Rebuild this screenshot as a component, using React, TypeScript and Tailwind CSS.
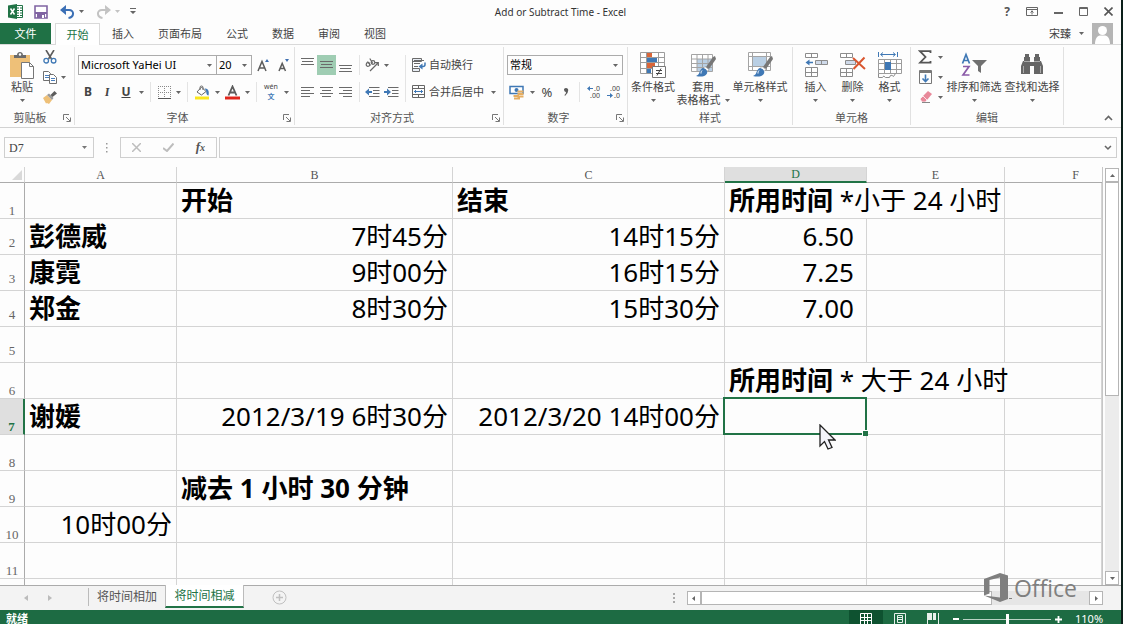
import { useState, type ReactNode } from "react";
import clsx from "clsx";

type Cell = {
  text?: ReactNode;
  bold?: boolean;
  align?: "right";
  indent?: boolean;
  span?: number;
  selected?: boolean;
};

const TABS = ["插入", "页面布局", "公式", "数据", "审阅", "视图"];

const COLUMNS = ["A", "B", "C", "D", "E", "F"];

const empty: Cell = {};

const ROWS: Cell[][] = [
  [
    empty,
    { text: "开始", bold: true },
    { text: "结束", bold: true },
    { text: <><b>所用时间</b> *小于 24 小时</>, span: 2 },
    empty,
  ],
  [
    { text: "彭德威", bold: true },
    { text: "7时45分", align: "right" },
    { text: "14时15分", align: "right" },
    { text: "6.50", align: "right", indent: true },
    empty,
    empty,
  ],
  [
    { text: "康霓", bold: true },
    { text: "9时00分", align: "right" },
    { text: "16时15分", align: "right" },
    { text: "7.25", align: "right", indent: true },
    empty,
    empty,
  ],
  [
    { text: "郑金", bold: true },
    { text: "8时30分", align: "right" },
    { text: "15时30分", align: "right" },
    { text: "7.00", align: "right", indent: true },
    empty,
    empty,
  ],
  [empty, empty, empty, empty, empty, empty],
  [empty, empty, empty, { text: <><b>所用时间</b> * 大于 24 小时</>, span: 3 }],
  [
    { text: "谢媛", bold: true },
    { text: "2012/3/19 6时30分", align: "right" },
    { text: "2012/3/20 14时00分", align: "right" },
    { selected: true },
    empty,
    empty,
  ],
  [empty, empty, empty, empty, empty, empty],
  [empty, { text: "减去 1 小时 30 分钟", bold: true }, empty, empty, empty, empty],
  [{ text: "10时00分", align: "right" }, empty, empty, empty, empty, empty],
  [empty, empty, empty, empty, empty, empty],
];

function Arrow({ className = "" }: { className?: string }) {
  return (
    <svg width="5" height="3" viewBox="0 0 5 3" className={clsx("shrink-0", className)} aria-hidden="true">
      <path d="M0 0h5L2.5 3z" fill="currentColor" />
    </svg>
  );
}

function Drop({ label }: { label: string }) {
  return (
    <button type="button" aria-label={label} className="flex h-5 w-2.5 shrink-0 items-center justify-center text-[#666]">
      <Arrow />
    </button>
  );
}

function Tool({ label, className = "w-5", children }: { label: string; className?: string; children: ReactNode }) {
  return (
    <button
      type="button"
      aria-label={label}
      className={clsx("flex h-5 shrink-0 items-center justify-center text-[#444]", className)}
    >
      {children}
    </button>
  );
}

function Divider() {
  return <span className="mx-1 h-5 w-px shrink-0 bg-[#e4e4e4]" />;
}

function BigButton({ icon, label, second, className }: { icon: ReactNode; label: string; second?: string; className: string }) {
  return (
    <button type="button" className={clsx("flex shrink-0 flex-col items-center whitespace-nowrap text-[11px] leading-[14px]", className)}>
      <span className="flex h-7 items-center">{icon}</span>
      <span className="mt-px">{label}</span>
      <span className="flex h-3 items-center gap-1">
        {second}
        <Arrow className="text-[#666]" />
      </span>
    </button>
  );
}

function Group({ title, launcher, className, children }: { title: string; launcher?: boolean; className: string; children: ReactNode }) {
  return (
    <section className={clsx("flex shrink-0 flex-col justify-between border-r border-[#e1e1e1]", className)} aria-label={title}>
      {children}
      <div className="flex h-3.5 items-center text-[11px] leading-[14px] text-[#555]">
        <span className="flex-1 text-center">{title}</span>
        {launcher && (
          <button type="button" aria-label={`${title}设置`} className="flex w-3.5 items-end justify-center">
            <svg width="8" height="8" viewBox="0 0 8 8" fill="none" stroke="#777">
              <path d="M.5 6V.5H6M3 3l4 4M7.500 3.500v4h-4" />
            </svg>
          </button>
        )}
      </div>
    </section>
  );
}

/* horizontal bars used by all of the alignment buttons */
function Lines({ rows }: { rows: [number, number, number][] }) {
  return (
    <svg width="13" height="16" viewBox="0 0 13 16" stroke="#6a6a6a" aria-hidden="true">
      {rows.map(([x1, x2, y]) => (
        <path key={y} d={`M${x1} ${y}.5H${x2}`} />
      ))}
    </svg>
  );
}

function PasteIcon() {
  return (
    <svg width="26" height="28" viewBox="0 0 26 28">
      <path d="M1 4h20v22H1z" fill="#eec078" />
      <path d="M5 7V4h3c0-4 6-4 6 0h3v3z" fill="#6b6b6b" />
      <circle cx="11" cy="3.500" r="1.200" fill="#fff" />
      <path d="M12.500 11.500h8l4 4v12h-12z" fill="#fff" stroke="#777" />
      <path d="M20.500 11.500v4h4" fill="none" stroke="#777" />
    </svg>
  );
}

function CutIcon() {
  return (
    <svg width="14" height="14" viewBox="0 0 14 14" fill="none">
      <path d="M3 0l5.500 9M11 0L5.500 9" stroke="#5c5c5c" strokeWidth="1.600" />
      <circle cx="3.200" cy="10.700" r="2.300" stroke="#3f78b5" strokeWidth="1.300" />
      <circle cx="10.600" cy="10.700" r="2.300" stroke="#3f78b5" strokeWidth="1.300" />
    </svg>
  );
}

function CopyIcon() {
  return (
    <svg width="14" height="14" viewBox="0 0 14 14" fill="#fff" stroke="#707070">
      <path d="M.5 1.500h5l2 2v7h-7z" />
      <path d="M2 5.500h4M2 7.500h4" stroke="#4a7ebb" />
      <path d="M6.500 4.500h4l3 3v6h-7z" />
      <path d="M8 8.500h4M8 10.500h4" stroke="#4a7ebb" />
    </svg>
  );
}

function BrushIcon() {
  return (
    <svg width="14" height="13" viewBox="0 0 14 13">
      <path d="M0 7l4-3 5 5-3 4-2-1-1 .5z" fill="#eec078" />
      <path d="M4 4l2-1.500L10.500 7 9 9z" fill="#999" />
      <path d="M7.500 4L11.500 0 14 2.500l-4.500 3.500z" fill="#5c5c5c" />
    </svg>
  );
}

function FontSizeIcon({ up }: { up?: boolean }) {
  return (
    <svg width="14" height="14" viewBox="0 0 14 14" fill="none">
      {up ? (
        <path d="M1 13L5 3.500 9 13M2.500 10h5" stroke="#5c5c5c" strokeWidth="1.500" />
      ) : (
        <path d="M2 13L5.200 5.500 8.500 13M3 10.500h4.500" stroke="#5c5c5c" strokeWidth="1.500" />
      )}
      <path d={up ? "M8 4l2-3 2 3z" : "M8 1h4l-2 3z"} fill="#3f6fb0" />
    </svg>
  );
}

function BorderIcon() {
  return (
    <svg width="13" height="13" viewBox="0 0 13 13" stroke="#8a8a8a" fill="none">
      <path d="M.5 0v12M6.500 0v12M12.500 0v12M0 .5h12M0 6.500h12" strokeDasharray="1 1" />
      <path d="M0 12.500h13" stroke="#555" />
    </svg>
  );
}

function FillIcon() {
  return (
    <svg width="15" height="15" viewBox="0 0 15 15" fill="none">
      <path d="M2 7l4.500-5L11 6.500 6.500 10z" fill="#fff" stroke="#666" />
      <path d="M5 5V2.500a1.500 1.500 0 013 0V5" stroke="#666" />
      <path d="M9.500 3.500c3.500-.5 5 2.500 4 7-2.500-.5-2-3-2.500-5z" fill="#3f78b5" />
      <path d="M0 11.500h14v3H0z" fill="#fbe61c" />
    </svg>
  );
}

function FontColorIcon() {
  return (
    <svg width="15" height="15" viewBox="0 0 15 15" fill="none">
      <path d="M3.500 10.500L7.500 1.500l4 9M5 7.500h5" stroke="#5c5c5c" strokeWidth="1.800" />
      <path d="M0 11.500h15v3H0z" fill="#e0261c" />
    </svg>
  );
}

function OrientIcon() {
  return (
    <svg width="15" height="14" viewBox="0 0 15 14" fill="none" stroke="#666" strokeWidth="1.200">
      <circle cx="3" cy="6.500" r="1.800" />
      <path d="M2.500 3.500l3 4" />
      <circle cx="8" cy="4.500" r="1.800" />
      <path d="M4.800.5l3 5M5 13l8-8M10 4.700h3.300V8" />
    </svg>
  );
}

function IndentIcon({ right }: { right?: boolean }) {
  return (
    <svg width="15" height="12" viewBox="0 0 15 12" fill="none">
      <path d="M4 1.500h10.500M8 4.500h6.500M8 7.500h6.500M4 10.500h10.500" stroke="#6a6a6a" />
      <path d={right ? "M0 5h3V2.500L7 6 3 9.500V7H0z" : "M7 5H4V2.500L0 6l4 3.500V7h3z"} fill="#3f78b5" />
    </svg>
  );
}

function WrapIcon() {
  return (
    <svg width="14" height="14" viewBox="0 0 14 14" fill="none">
      <path d="M.5.500h9v3h-9zM.5 10.500h7v3h-7z" fill="#e8edf4" stroke="#6a6a6a" />
      <path d="M2 2.500h10M.5 3v8M2 5.500h6M2 8.500h4" stroke="#6a6a6a" />
      <path d="M13 4.500v2q0 2-2 2H9.500" stroke="#3f78b5" strokeWidth="1.500" />
      <path d="M10.500 5.500v6l-4-3z" fill="#3f78b5" />
    </svg>
  );
}

function MergeIcon() {
  return (
    <svg width="14" height="14" viewBox="0 0 14 14" fill="none" stroke="#666">
      <path d="M.5.500h12v12H.5zM.5 3.500h12M.5 9.500h12M6.500.500v3M6.500 9.500v3" />
      <path d="M2 6.500h9M4 5L2.500 6.500 4 8M9 5l1.500 1.500L9 8" stroke="#3f78b5" />
    </svg>
  );
}

function CurrencyIcon() {
  return (
    <svg width="16" height="15" viewBox="0 0 16 15" fill="none">
      <path d="M1 1.500h13v7H1z" fill="#fff" stroke="#3f78b5" strokeWidth="1.500" />
      <circle cx="7.500" cy="5" r="2" fill="#3f78b5" />
      <path d="M8.500 6.500h6M8.500 9h6M4.500 11h5.500M5 13.500h6M8.500 11.500h6" stroke="#e6ae62" strokeWidth="1.800" />
    </svg>
  );
}

function DecimalIcon({ more }: { more?: boolean }) {
  return (
    <svg width="14" height="14" viewBox="0 0 14 14" fontFamily="Noto Sans" fontSize="7" fill="#444">
      <text x={more ? 7 : 3} y="6">{more ? ".0" : ".00"}</text>
      <text x={more ? 3 : 7} y="13">{more ? ".00" : ".0"}</text>
      {more ? (
        <path d="M0 3.500L3 1v2h3v1H3v2z" fill="#3f78b5" />
      ) : (
        <path d="M6 10.500L3 8v2H0v1h3v2z" fill="#3f78b5" />
      )}
    </svg>
  );
}

function ConditionalIcon() {
  return (
    <svg width="28" height="28" viewBox="0 0 28 28" fill="none">
      <path d="M1.500 1.500h24v21h-24z" fill="#fff" />
      <path d="M1.500 1.500h24v21h-24zM7.500 1.500v21M19.500 1.500v21M1.500 6.500h24M1.500 11.500h24M1.500 17.500h24" stroke="#9c9c9c" />
      <path d="M8 2h5v4H8zM8 12h8v5H8z" fill="#d9663a" />
      <path d="M8 7h10v4H8zM8 18h4v4H8z" fill="#3f78b5" />
      <path d="M13.500 15.500h13v11h-13z" fill="#fff" stroke="#777" />
      <path d="M17 19.500h6M17 22.500h6M22 17.500l-4 7" stroke="#444" />
    </svg>
  );
}

function StyleBrush() {
  return (
    <>
      <path d="M26 5l1 3-7 10-3-2 7-10z" fill="#777" />
      <path d="M16 15.500l4 3-2 2-4-3z" fill="#fff" stroke="#888" strokeWidth=".6" />
      <path d="M14 17c3 .5 5 3 4 5.500C16 26 11 26 7 25c3-1 3-3 4-5s2-2.800 3-3z" fill="#3f78b5" />
      <path d="M13 19.500c-1 1-1 2-1 3" stroke="#fff" />
    </>
  );
}

function TableStyleIcon() {
  return (
    <svg width="28" height="28" viewBox="0 0 28 28" fill="none">
      <path d="M2.500 3.500h21v17h-21z" fill="#fff" />
      <path d="M8 8h15.500v12.500H8z" fill="#b9cfe4" />
      <path d="M2.500 3.500h21v17h-21zM8 3.500v17M13.500 3.500v17M19 3.500v17M2.500 8h21M2.500 12.500h21M2.500 16.500h21" stroke="#a4a4a4" />
      <StyleBrush />
    </svg>
  );
}

function CellStyleIcon() {
  return (
    <svg width="28" height="28" viewBox="0 0 28 28" fill="none">
      <path d="M2.500 1.500h21v18h-21z" fill="#fff" />
      <path d="M7 6h13v9H7z" fill="#b9cfe4" />
      <path d="M2.500 1.500h22v18h-22zM6.500 1.500v18M20.500 1.500v18M2.500 5.500h22M2.500 15.500h22" stroke="#a4a4a4" />
      <StyleBrush />
    </svg>
  );
}

function InsertCellsIcon() {
  return (
    <svg width="26" height="28" viewBox="0 0 26 28" fill="none" stroke="#8c8c8c">
      <path d="M2.500 2.500h12v4h-12zM8.500 2.500v4" fill="#fff" />
      <path d="M2.500 16.500h12v9h-12zM8.500 16.500v9M2.500 21.500h12" fill="#fff" />
      <path d="M12.500 9.500h12v4h-12zM18.500 9.500v4" fill="#cfdaea" />
      <path d="M10 10.800H6.500V8.500L2.500 11.500l4 3v-2.200H10z" fill="#3f78b5" stroke="none" />
    </svg>
  );
}

function DeleteCellsIcon() {
  return (
    <svg width="27" height="28" viewBox="0 0 27 28" fill="none" stroke="#8c8c8c">
      <path d="M1.500 2.500h12v4h-12zM7.500 2.500v4" fill="#fff" />
      <path d="M1.500 17.500h12v8h-12zM7.500 17.500v8M1.500 21.500h12" fill="#fff" />
      <path d="M6.500 9.500h10v4h-10z" fill="#cfdaea" />
      <path d="M14 7l12 11M25.500 6.500L14.500 18" stroke="#d9562f" strokeWidth="2" />
    </svg>
  );
}

function FormatCellsIcon() {
  return (
    <svg width="26" height="28" viewBox="0 0 26 28" fill="none">
      <path d="M1.500 1v5M20.500 1v5M4 3.500h14M6 1.500l-2.500 2L6 5.500M16 1.500l2.500 2-2.500 2" stroke="#3f78b5" />
      <path d="M1.500 8.500h23v14h-23zM7.500 8.500v14M13.500 8.500v14M19.500 8.500v14M1.500 12.500h23M1.500 18.500h23" fill="#fff" stroke="#9c9c9c" />
      <path d="M8 11h6v8H8z" fill="#3f78b5" />
      <path d="M1.500 22.500v4h4q1-3 3 0h4q1-4 4-1l2-3" stroke="#8c8c8c" />
    </svg>
  );
}

function SortIcon() {
  return (
    <svg width="26" height="28" viewBox="0 0 26 28" fill="none">
      <path d="M1.500 12.500L5 3.500l3.500 9M2.500 9.500h5" stroke="#3f78b5" strokeWidth="1.700" />
      <path d="M2 15.500h6l-6 8.500h6.500" stroke="#8a5aa8" strokeWidth="1.700" />
      <path d="M11 9h15l-6 6v7l-3-2v-5z" fill="#707070" />
    </svg>
  );
}

function FindIcon() {
  return (
    <svg width="24" height="28" viewBox="0 0 24 28" fill="#666">
      <path d="M5 3h4v3h1v5h4V6h1V3h4v3h1v4h1l2 5v8h-9v-8h-4v8H1v-8l2-5h1V6h1z" />
      <path d="M4 10.500h6M14 10.500h6M3.500 15v7M20.500 15v7" stroke="#bbb" strokeWidth=".8" />
    </svg>
  );
}

function TitleBar() {
  return (
    <header className="flex h-[23px] items-center pl-2 pr-2">
      <div className="flex flex-1 items-center text-[#666]">
        <svg width="15" height="15" viewBox="0 0 15 15" className="mr-[11px]" aria-hidden="true">
          <path d="M8 1.500h6.500v12H8z" fill="#fff" stroke="#217346" />
          <path d="M9 4h5M9 6.500h5M9 9h5M9 11.500h5" stroke="#217346" strokeWidth="1.200" />
          <path d="M11.500 2v11" stroke="#fff" />
          <path d="M0 1.500L9 0v15l-9-1.500z" fill="#217346" />
          <path d="M2.500 4.500l4 6M6.500 4.500l-4 6" stroke="#fff" strokeWidth="1.500" />
        </svg>
        <button type="button" aria-label="保存" className="mr-3">
          <svg width="14" height="14" viewBox="0 0 14 14">
            <path d="M1 1h12v12H1z" fill="#fff" stroke="#8064a2" strokeWidth="1.600" />
            <path d="M1 7h12v2H1zM3 9h8v4H3z" fill="#8064a2" />
            <path d="M8 10h2v3H8z" fill="#fff" />
          </svg>
        </button>
        <button type="button" aria-label="撤消" className="mr-1">
          <svg width="15" height="14" viewBox="0 0 15 14" fill="none">
            <path d="M3 5h6c5.500 0 5.500 7-.5 8" stroke="#3b6fb5" strokeWidth="2" />
            <path d="M0 5l6-5v3.500L4 5l2 1.500V10z" fill="#3b6fb5" />
          </svg>
        </button>
        <Arrow />
        <button type="button" aria-label="恢复" className="ml-3 mr-1">
          <svg width="15" height="14" viewBox="0 0 15 14" fill="none">
            <path d="M12 5H6C.5 5 .5 12 6.500 13" stroke="#c3c3c3" strokeWidth="2" />
            <path d="M15 5L9 0v3.500L11 5 9 6.500V10z" fill="#c3c3c3" />
          </svg>
        </button>
        <Arrow className="text-[#c3c3c3]" />
        <button type="button" aria-label="自定义快速访问工具栏" className="ml-2.5">
          <svg width="6" height="7" viewBox="0 0 6 7" fill="#666">
            <path d="M0 0h6v1H0zM0 3h6L3 6z" />
          </svg>
        </button>
      </div>
      <h1 className="text-[10px] leading-4 text-[#333]">Add or Subtract Time - Excel</h1>
      <div className="flex flex-1 items-center justify-end gap-4">
        <button type="button" aria-label="帮助" className="text-[12px] font-bold leading-4 text-[#555]">?</button>
        <button type="button" aria-label="功能区显示选项">
          <svg width="12" height="9" viewBox="0 0 12 9" fill="none" stroke="#666">
            <path d="M.5.500h11v8H.5zM.5 2.500h11M6 7.500v-4M4.500 5.500L6 4l1.500 1.500" />
          </svg>
        </button>
        <button type="button" aria-label="最小化">
          <svg width="9" height="9" viewBox="0 0 9 9"><path d="M0 5h9v2H0z" fill="#666" /></svg>
        </button>
        <button type="button" aria-label="最大化">
          <svg width="9" height="9" viewBox="0 0 9 9" fill="none" stroke="#666"><path d="M.5.500h8v8h-8zM.5 1.500h8" /></svg>
        </button>
        <button type="button" aria-label="关闭">
          <svg width="9" height="9" viewBox="0 0 9 9" stroke="#555" strokeWidth="1.600"><path d="M.5.500l8 8M8.500.500l-8 8" /></svg>
        </button>
      </div>
    </header>
  );
}

function TabStrip() {
  return (
    <nav className="flex h-[22px] items-stretch border-b border-[#d9d9d9] text-[11px] leading-[14px] text-[#444]">
      <button type="button" className="w-[51px] shrink-0 bg-[#1f7145] text-white">文件</button>
      <button type="button" className="relative -mb-px ml-1 w-[45px] shrink-0 border border-b-0 border-[#d9d9d9] bg-white text-[#217346]">
        开始
      </button>
      {TABS.map((tab) => (
        <button key={tab} type="button" className="shrink-0 px-3">{tab}</button>
      ))}
      <button type="button" className="ml-auto flex items-center gap-2 pr-2">
        宋臻
        <Arrow className="text-[#666]" />
        <svg width="21" height="21" viewBox="0 0 21 21" aria-hidden="true">
          <path d="M0 0h21v21H0z" fill="#b5b5b5" />
          <circle cx="10.500" cy="7.500" r="4.500" fill="#fff" />
          <path d="M3 21c0-5 2-8 5-8.500h5c3 .5 5 3.500 5 8.500z" fill="#fff" />
        </svg>
      </button>
    </nav>
  );
}

function Ribbon() {
  return (
    <div className="flex h-[83px] items-stretch border-b border-[#d2d2d2] py-0.5 text-[#444]">
      <Group title="剪贴板" launcher className="w-[75px]">
        <div className="flex items-start pl-1">
          <BigButton icon={<PasteIcon />} label="粘贴" className="mt-1 w-9" />
          <div className="flex flex-col pl-0.5">
            <Tool label="剪切" className="w-4"><CutIcon /></Tool>
            <div className="flex">
              <Tool label="复制" className="w-4"><CopyIcon /></Tool>
              <Drop label="复制选项" />
            </div>
            <Tool label="格式刷" className="w-4"><BrushIcon /></Tool>
          </div>
        </div>
      </Group>

      <Group title="字体" launcher className="w-[220px]">
        <div className="mt-2 flex flex-col gap-[7px] pl-[3px]">
          <div className="flex items-center text-[#666]">
            <div className="flex h-5 w-[139px] items-center border border-[#ababab] pr-1">
              <select aria-label="字体" className="min-w-0 flex-1 appearance-none bg-transparent pl-0.5 text-[11px] leading-4 text-black">
                <option>Microsoft YaHei UI</option>
              </select>
              <Arrow />
            </div>
            <div className="flex h-5 w-[35px] items-center border border-l-0 border-[#ababab] pr-1">
              <select aria-label="字号" className="min-w-0 flex-1 appearance-none bg-transparent pl-0.5 text-[11px] leading-4 text-black">
                <option>20</option>
              </select>
              <Arrow />
            </div>
            <Tool label="增大字号" className="ml-0.5 w-5"><FontSizeIcon up /></Tool>
            <Tool label="减小字号"><FontSizeIcon /></Tool>
          </div>
          <div className="flex items-center text-[12px] leading-4">
            <Tool label="加粗"><b>B</b></Tool>
            <Tool label="倾斜" className="w-[18px]"><i className="font-serif font-bold">I</i></Tool>
            <Tool label="下划线"><u className="font-bold">U</u></Tool>
            <Drop label="下划线选项" />
            <Divider />
            <Tool label="边框" className="w-[18px]"><BorderIcon /></Tool>
            <Drop label="边框选项" />
            <Divider />
            <Tool label="填充颜色"><FillIcon /></Tool>
            <Drop label="填充颜色选项" />
            <Tool label="字体颜色"><FontColorIcon /></Tool>
            <Drop label="字体颜色选项" />
            <Divider />
            <Tool label="拼音">
              <span className="flex flex-col items-center text-[7px] leading-[10px]">
                <span>wén</span>
                <span className="font-bold text-[#3f78b5]">文</span>
              </span>
            </Tool>
            <Drop label="拼音选项" />
          </div>
        </div>
      </Group>

      <Group title="对齐方式" launcher className="w-[209px]">
        <div className="mt-2 flex pl-[3px]">
          <div className="flex flex-col gap-[7px]">
            <div className="flex items-center">
              <Tool label="顶端对齐" className="w-[19px]"><Lines rows={[[0, 13, 1], [1, 12, 4], [0, 13, 7]]} /></Tool>
              <Tool label="垂直居中" className="w-[19px] bg-[#9fcdb3]"><Lines rows={[[0, 13, 4], [1, 12, 7], [0, 13, 10]]} /></Tool>
              <Tool label="底端对齐" className="w-[19px]"><Lines rows={[[0, 13, 8], [1, 12, 11], [0, 13, 14]]} /></Tool>
              <Divider />
              <Tool label="方向" className="w-[17px]"><OrientIcon /></Tool>
              <Drop label="方向选项" />
            </div>
            <div className="flex items-center">
              <Tool label="左对齐" className="w-[19px]"><Lines rows={[[0, 13, 3], [0, 9, 6], [0, 13, 9], [0, 9, 12]]} /></Tool>
              <Tool label="居中" className="w-[19px]"><Lines rows={[[0, 13, 3], [2, 11, 6], [0, 13, 9], [2, 11, 12]]} /></Tool>
              <Tool label="右对齐" className="w-[19px]"><Lines rows={[[0, 13, 3], [4, 13, 6], [0, 13, 9], [4, 13, 12]]} /></Tool>
              <Divider />
              <Tool label="减少缩进量" className="w-[17px]"><IndentIcon /></Tool>
              <Tool label="增加缩进量"><IndentIcon right /></Tool>
            </div>
          </div>
          <span className="mx-1 w-px bg-[#e4e4e4]" />
          <div className="flex flex-col gap-[7px] pl-0.5 text-[11px] leading-4">
            <button type="button" className="flex h-5 items-center gap-[3px]"><WrapIcon />自动换行</button>
            <div className="flex">
              <button type="button" className="flex h-5 items-center gap-[3px]"><MergeIcon />合并后居中</button>
              <span className="w-1" />
              <Drop label="合并选项" />
            </div>
          </div>
        </div>
      </Group>

      <Group title="数字" launcher className="w-[124px]">
        <div className="mt-2 flex flex-col gap-[7px] pl-[3px]">
          <div className="flex h-5 w-[116px] items-center border border-[#ababab] pr-1 text-[#666]">
            <select aria-label="数字格式" className="min-w-0 flex-1 appearance-none bg-transparent pl-0.5 text-[11px] leading-4 text-black">
              <option>常规</option>
            </select>
            <Arrow />
          </div>
          <div className="flex items-center text-[13px] leading-4">
            <Tool label="会计数字格式"><CurrencyIcon /></Tool>
            <Drop label="货币选项" />
            <Tool label="百分比样式">%</Tool>
            <Tool label="千位分隔样式" className="w-[18px]">
              <svg width="5" height="8" viewBox="0 0 5 8"><path d="M0 1q2-2 4 0 1 4-3 7l-.5-1Q2 6 2 4 0 4 0 1z" fill="#5c5c5c" /></svg>
            </Tool>
            <Divider />
            <Tool label="增加小数位数"><DecimalIcon more /></Tool>
            <Tool label="减少小数位数"><DecimalIcon /></Tool>
          </div>
        </div>
      </Group>

      <Group title="样式" className="w-[165px]">
        <div className="mt-1 flex">
          <BigButton icon={<ConditionalIcon />} label="条件格式" className="w-[50px]" />
          <BigButton icon={<TableStyleIcon />} label="套用" second="表格格式" className="w-[50px]" />
          <BigButton icon={<CellStyleIcon />} label="单元格样式" className="w-16" />
        </div>
      </Group>

      <Group title="单元格" className="w-[118px]">
        <div className="mt-1 flex pl-1">
          <BigButton icon={<InsertCellsIcon />} label="插入" className="w-[37px]" />
          <BigButton icon={<DeleteCellsIcon />} label="删除" className="w-[37px]" />
          <BigButton icon={<FormatCellsIcon />} label="格式" className="w-[37px]" />
        </div>
      </Group>

      <Group title="编辑" className="w-[153px]">
        <div className="flex items-start">
          <div className="flex w-[34px] flex-col pl-1">
            <div className="flex">
              <Tool label="自动求和">
                <svg width="14" height="14" viewBox="0 0 14 14" fill="none" stroke="#555" strokeWidth="1.800">
                  <path d="M12.500 3V1.200H2L7.500 7 2 12.700h10.500V11" />
                </svg>
              </Tool>
              <Drop label="求和选项" />
            </div>
            <div className="flex">
              <Tool label="填充">
                <svg width="13" height="14" viewBox="0 0 13 14" fill="none" stroke="#777">
                  <path d="M.5.500h12v13H.5z" />
                  <path d="M1 2h11" strokeWidth="2" />
                  <path d="M6.500 4.500v7M3.500 8.500l3 3 3-3" stroke="#3f78b5" strokeWidth="1.600" />
                </svg>
              </Tool>
              <Drop label="填充选项" />
            </div>
            <div className="flex">
              <Tool label="清除">
                <svg width="13" height="12" viewBox="0 0 13 12">
                  <path d="M4 5l5-5 4 3-5 6z" fill="#e8899a" />
                  <path d="M1 8l3-3 4 4-1.500 2H3z" fill="#e8899a" stroke="#fff" strokeWidth=".7" />
                  <path d="M3 11.500h8" stroke="#888" />
                </svg>
              </Tool>
              <Drop label="清除选项" />
            </div>
          </div>
          <BigButton icon={<SortIcon />} label="排序和筛选" className="mt-1 w-[58px]" />
          <BigButton icon={<FindIcon />} label="查找和选择" className="mt-1 w-[58px]" />
        </div>
      </Group>

      <button type="button" aria-label="折叠功能区" className="mb-1 ml-auto mr-2 self-end">
        <svg width="9" height="6" viewBox="0 0 9 6" fill="none" stroke="#666" strokeWidth="1.600"><path d="M1 5l3.500-3.500L8 5" /></svg>
      </button>
    </div>
  );
}

function FormulaBar({ cell }: { cell: string }) {
  return (
    <div className="flex items-center px-1 py-[9px]">
      <div className="flex h-[21px] w-[90px] items-center border border-[#cfcfcf] pr-1.5">
        <input aria-label="名称框" defaultValue={cell} className="w-full min-w-0 bg-transparent pl-1 font-['Liberation_Serif',serif] text-[12px] text-[#444] outline-none" />
        <Arrow className="text-[#777]" />
      </div>
      <svg width="26" height="10" viewBox="0 0 26 10" fill="#999" aria-hidden="true">
        <path d="M12 0h1.500v1.500H12zM12 4h1.500v1.500H12zM12 8h1.500v1.500H12z" />
      </svg>
      <div className="flex h-[21px] w-[97px] items-center justify-around border border-[#cfcfcf]">
        <button type="button" aria-label="取消">
          <svg width="9" height="9" viewBox="0 0 9 9" stroke="#bdbdbd" strokeWidth="1.500"><path d="M0 0l9 9M9 0L0 9" /></svg>
        </button>
        <button type="button" aria-label="输入">
          <svg width="11" height="9" viewBox="0 0 11 9" fill="none" stroke="#bdbdbd" strokeWidth="2"><path d="M0 5l4 3 6.500-7.500" /></svg>
        </button>
        <button type="button" aria-label="插入函数" className="font-['Liberation_Serif',serif] text-[13px] font-bold italic leading-4 text-[#555]">
          f<span className="text-[10px]">x</span>
        </button>
      </div>
      <div className="ml-0.5 flex h-[21px] flex-1 items-center border border-[#cfcfcf] pr-1">
        <input aria-label="编辑栏" className="w-full bg-transparent px-1 text-[12px] outline-none" />
        <svg width="8" height="6" viewBox="0 0 8 6" fill="none" stroke="#666" strokeWidth="1.600"><path d="M1 1l3 3 3-3" /></svg>
      </div>
    </div>
  );
}

function Pointer() {
  return (
    <svg width="17" height="26" viewBox="0 0 17 26" className="absolute left-[94px] top-[25px] z-10" aria-hidden="true">
      <path d="M1 1v21l4.500-4.500L9 25l4-1.500-3.500-7.500H16z" fill="#f4f4fb" stroke="#222" strokeWidth="1.300" />
    </svg>
  );
}

function Sheet() {
  return (
    <table className="w-full table-fixed border-separate border-spacing-0">
      <colgroup>
        <col className="w-[25px]" />
        <col className="w-[152px]" />
        <col className="w-[276px]" />
        <col className="w-[272px]" />
        <col className="w-[142px]" />
        <col className="w-[138px]" />
        <col />
      </colgroup>
      <thead>
        <tr className="h-4 font-['Liberation_Serif',serif] text-[12px] leading-[14px] text-[#555]">
          <th aria-label="全选" className="border-b border-r border-b-[#ababab] border-r-[#d4d4d4] p-0">
            <svg width="10" height="10" viewBox="0 0 10 10" className="ml-3"><path d="M10 0v10H0z" fill="#d9d9d9" /></svg>
          </th>
          {COLUMNS.map((name) => (
            <th
              key={name}
              scope="col"
              className={clsx(
                "border-b border-r border-r-[#d4d4d4] p-0 font-normal",
                name === "D" ? "border-b-2 border-b-[#217346] bg-[#dfdfdf] font-bold text-[#217346]" : "border-b-[#ababab]",
                name === "F" && "border-r-0 pl-11",
              )}
            >
              {name}
            </th>
          ))}
        </tr>
      </thead>
      <tbody>
        {ROWS.map((cells, r) => (
          <tr key={r} className="h-9">
            <th
              scope="row"
              className={clsx(
                "border-b border-r px-0 pt-0 align-bottom font-['Liberation_Serif',serif] text-[13px] leading-[14px]",
                r > 0 && r < 5 ? "pb-1" : "pb-0",
                r === 6
                  ? "border-r-2 border-b-[#d4d4d4] border-r-[#217346] bg-[#dfdfdf] font-bold text-[#217346]"
                  : "border-b-[#d4d4d4] border-r-[#ababab] font-normal text-[#666]",
              )}
            >
              {r + 1}
            </th>
            {cells.map((cell, c) => (
              <td
                key={c}
                colSpan={cell.span}
                className={clsx(
                  "h-9 whitespace-nowrap border-b border-r border-[#d4d4d4] px-1 py-0 text-[26px] leading-[35px] text-black",
                  cell.bold && "font-bold",
                  cell.align === "right" && "text-right",
                  cell.indent && "pr-3",
                  cell.selected && "relative",
                )}
              >
                {cell.text}
                {cell.selected && (
                  <>
                    <span className="absolute -bottom-px -left-0.5 -right-px -top-0.5 border-2 border-[#217346]" />
                    <span className="absolute -bottom-0.5 -right-0.5 size-[6px] border-l border-t border-white bg-[#217346]" />
                    <Pointer />
                  </>
                )}
              </td>
            ))}
          </tr>
        ))}
        {/* the next row only peeks out above the sheet tabs */}
        <tr className="h-9" aria-hidden="true">
          <td className="border-r border-[#ababab]" />
          {COLUMNS.map((name) => (
            <td key={name} className="border-r border-[#d4d4d4]" />
          ))}
        </tr>
      </tbody>
    </table>
  );
}

function ScrollButton({ label, turn }: { label: string; turn?: string }) {
  return (
    <button type="button" aria-label={label} className="flex size-3.5 shrink-0 items-center justify-center border border-[#b5b5b5] bg-white text-[#666]">
      <Arrow className={turn} />
    </button>
  );
}

function VerticalScroll() {
  return (
    <div className="flex w-[18px] shrink-0 flex-col items-center pt-px">
      <ScrollButton label="向上滚动" turn="rotate-180" />
      <div className="flex w-3.5 flex-1 flex-col bg-[#ececec]">
        <div className="h-[55%] border border-[#b5b5b5] bg-white" />
      </div>
      <ScrollButton label="向下滚动" />
    </div>
  );
}

function SheetTabs() {
  return (
    <div className="flex h-[25px] shrink-0 items-start border-t border-[#ababab] bg-[#f3f3f3] text-[12px] leading-4">
      <div className="flex h-6 w-[88px] items-center gap-5 pl-6">
        <button type="button" aria-label="上一个工作表">
          <svg width="4" height="6" viewBox="0 0 4 6"><path d="M4 0v6L0 3z" fill="#bbb" /></svg>
        </button>
        <button type="button" aria-label="下一个工作表">
          <svg width="4" height="6" viewBox="0 0 4 6"><path d="M0 0v6l4-3z" fill="#bbb" /></svg>
        </button>
      </div>
      <button type="button" className="mt-0.5 h-[18px] w-[77px] border-l border-[#bbb] text-[#555]">将时间相加</button>
      <button type="button" className="-mt-px h-[23px] w-[79px] border-x border-b-2 border-x-[#bbb] border-b-[#217346] bg-white text-[#217346]">
        将时间相减
      </button>
      <button type="button" aria-label="新工作表" className="ml-7 mt-1">
        <svg width="15" height="15" viewBox="0 0 15 15" fill="none" stroke="#c0c0c0">
          <circle cx="7.500" cy="7.500" r="6.500" />
          <path d="M4 7.500h7M7.500 4v7" strokeWidth="1.500" />
        </svg>
      </button>
      <div className="ml-auto flex w-[40%] items-center pr-[18px] pt-[5px]">
        <svg width="2" height="10" viewBox="0 0 2 10" fill="#aaa" className="mr-3 shrink-0" aria-hidden="true">
          <path d="M0 0h2v2H0zM0 4h2v2H0zM0 8h2v2H0z" />
        </svg>
        <ScrollButton label="向左滚动" turn="rotate-90" />
        <div className="flex h-3.5 flex-1 bg-[#e6e6e6]">
          <div className="w-3/4 border border-[#b5b5b5] bg-white" />
        </div>
        <ScrollButton label="向右滚动" turn="-rotate-90" />
      </div>
    </div>
  );
}

function StatusBar() {
  const [zoom, setZoom] = useState(110);

  return (
    <footer className="h-3.5 shrink-0 overflow-hidden bg-[#1d6b43] text-[11px] text-white">
      <div className="flex h-[18px] items-center leading-[14px]">
        <span className="flex-1 pl-1.5 font-bold">就绪</span>
        <button type="button" aria-label="普通" className="flex h-full w-[34px] items-center justify-center bg-[#0e5230]">
          <svg width="12" height="12" viewBox="0 0 12 12" fill="none" stroke="#fff"><path d="M.5.500h11v11H.5zM4.500.500v11M7.500.500v11M.5 4.500h11M.5 7.500h11" /></svg>
        </button>
        <button type="button" aria-label="页面布局" className="flex h-full w-[34px] items-center justify-center">
          <svg width="12" height="12" viewBox="0 0 12 12" fill="none" stroke="#e8f0eb"><path d="M.5.500h11v11H.5zM3.500 2.500h5v7h-5zM4 4.500h4M4 6.500h4" /></svg>
        </button>
        <button type="button" aria-label="分页预览" className="flex h-full w-8 items-center justify-center">
          <svg width="12" height="12" viewBox="0 0 12 12"><path d="M0 0h5v7H0zM6 0h3v7H6z" fill="#e8f0eb" /><path d="M11.500 0v11.500H.5V0" fill="none" stroke="#e8f0eb" /></svg>
        </button>
        <button type="button" aria-label="缩小" className="flex w-3.5 items-center justify-center">
          <svg width="6" height="2" viewBox="0 0 6 2"><path d="M0 0h6v2H0z" fill="#fff" /></svg>
        </button>
        <input
          type="range"
          aria-label="显示比例"
          min={10}
          max={210}
          value={zoom}
          onChange={(e) => setZoom(Number(e.target.value))}
          className="h-px w-[88px] appearance-none bg-[#b9d2c4] [&::-webkit-slider-thumb]:h-2.5 [&::-webkit-slider-thumb]:w-[3px] [&::-webkit-slider-thumb]:appearance-none [&::-webkit-slider-thumb]:bg-white"
        />
        <button type="button" aria-label="放大" className="flex w-3.5 items-center justify-center">
          <svg width="7" height="7" viewBox="0 0 7 7" stroke="#fff" strokeWidth="1.800"><path d="M0 3.500h7M3.500 0v7" /></svg>
        </button>
        <span className="w-[56px] pl-2.5">{zoom}%</span>
      </div>
    </footer>
  );
}

function OfficeMark() {
  return (
    <div className="pointer-events-none absolute bottom-[22px] right-11 z-20 flex items-center gap-0.5 text-[#7f7f7f]">
      <svg width="28" height="29" viewBox="0 0 28 29" aria-hidden="true">
        <path d="M0 6L16 0l8 2.500v23.500L16 29 0 22.500l16 2V4.500L5.500 7v13.500L0 22.500z" fill="#7f7f7f" />
        <path d="M25 25.500h3" stroke="#7f7f7f" />
      </svg>
      <span className="font-['Open_Sans',sans-serif] text-[23px] leading-[28px]">Office</span>
    </div>
  );
}

export default function App() {
  return (
    <div className="relative flex h-screen flex-col overflow-hidden border-r-2 border-[#0b1f1a] bg-[#fdfdfd] font-['Noto_Sans','Noto_Sans_CJK_SC',sans-serif]">
      <TitleBar />
      <TabStrip />
      <Ribbon />
      <FormulaBar cell="D7" />
      <main className="flex min-h-0 flex-1">
        <div className="min-w-0 flex-1 overflow-hidden border-r border-[#c6c6c6]">
          <Sheet />
        </div>
        <VerticalScroll />
      </main>
      <SheetTabs />
      <StatusBar />
      <OfficeMark />
    </div>
  );
}
